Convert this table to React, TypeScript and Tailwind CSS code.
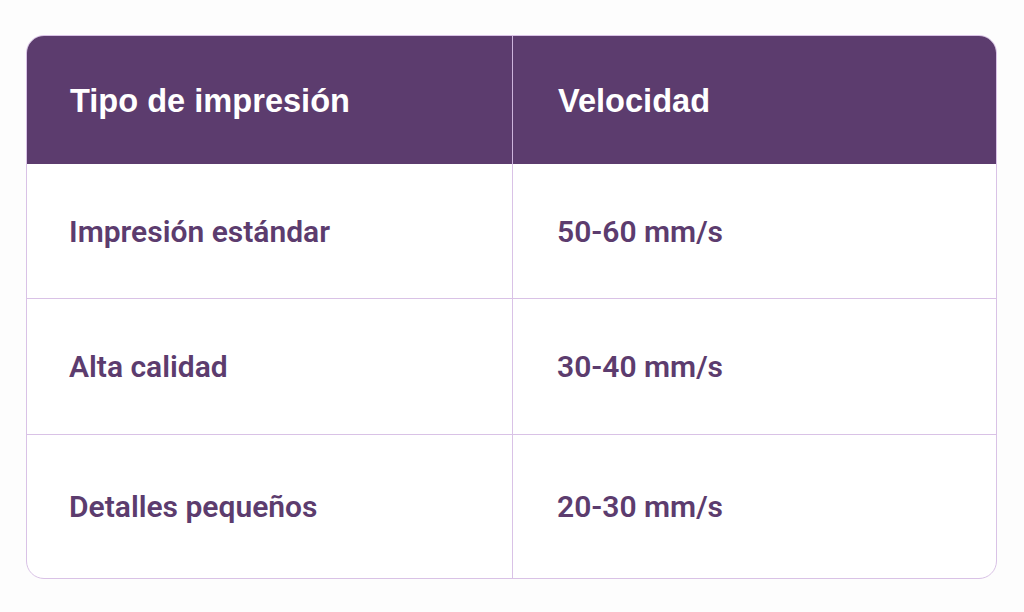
const rows = [
  { tipo: 'Impresión estándar', velocidad: '50-60 mm/s', h: 'h-[134px]' },
  { tipo: 'Alta calidad', velocidad: '30-40 mm/s', h: 'h-[136px]' },
  { tipo: 'Detalles pequeños', velocidad: '20-30 mm/s', h: 'h-[144px]' },
];

const App = () => {
  return (
    <div className="min-h-[612px] w-[1024px] bg-[#fdfdfd] pt-[35px] pl-[26px] font-['Roboto',sans-serif]">
      <div className="w-[971px] overflow-hidden rounded-[18px] border border-[#d9c2e6] bg-white">
        {/* encabezado */}
        <div className="grid h-[128px] grid-cols-[486px_1fr] bg-[#5c3c6e] font-['Liberation_Sans',Arial,sans-serif] text-[32.6px] font-bold text-white">
          <div className="flex items-center border-r border-[#cdb4dc] pl-[43px] pt-[2px]">Tipo de impresión</div>
          <div className="flex items-center pl-[45px] pt-[2px]">Velocidad</div>
        </div>

        {rows.map((row, i) => (
          <div
            key={i}
            className={`grid grid-cols-[486px_1fr] text-[30px] font-semibold text-[#5c3c6e] ${row.h} ${
              i > 0 ? 'border-t border-[#d9c2e6]' : ''
            }`}
          >
            <div className="flex items-center border-r border-[#d9c2e6] pl-[42px]">{row.tipo}</div>
            <div className="flex items-center pl-[44px]">{row.velocidad}</div>
          </div>
        ))}
      </div>
    </div>
  );
};

export default App;
